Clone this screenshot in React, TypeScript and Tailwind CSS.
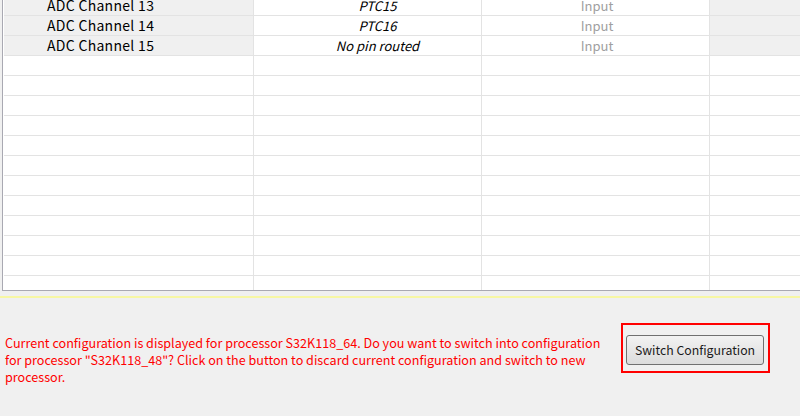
import React from "react";

const font = { fontFamily: '"Noto Sans CJK SC", "Noto Sans", sans-serif' };

const rows = [
  { name: "ADC Channel 13", pin: "PTC15", dir: "Input" },
  { name: "ADC Channel 14", pin: "PTC16", dir: "Input" },
  { name: "ADC Channel 15", pin: "No pin routed", dir: "Input" },
];

export default function App() {
  const empty = Array.from({ length: 12 });
  return (
    <div className="w-[800px] h-[416px] bg-[#f0f0f0] flex flex-col overflow-hidden text-[13px]" style={font}>
      <div className="ml-[2px] h-[291px] shrink-0 border-l border-b border-[#a9a9b2] bg-white overflow-hidden pl-[1px]">
        <div className="-mt-[4px] flex flex-col">
          {rows.map((r) => (
            <div key={r.name} className="flex h-[20px] border-b border-[#e3e3e3] leading-[19px]">
              <div className="w-[250px] shrink-0 border-r border-[#e3e3e3] bg-[#f0f0f0] pl-[43px] text-black text-[14px] tracking-[0.3px]">{r.name}</div>
              <div className="w-[228px] shrink-0 border-r border-[#e3e3e3] text-center italic text-black pl-[20px]">{r.pin}</div>
              <div className="w-[228px] shrink-0 border-r border-[#e3e3e3] text-center text-[#a0a0a0] pl-[3px]">{r.dir}</div>
              <div className="flex-1 bg-[#f0f0f0]" />
            </div>
          ))}
          {empty.map((_, i) => (
            <div key={i} className="flex h-[20px] border-b border-[#e3e3e3]">
              <div className="w-[250px] shrink-0 border-r border-[#e3e3e3]" />
              <div className="w-[228px] shrink-0 border-r border-[#e3e3e3]" />
              <div className="w-[228px] shrink-0 border-r border-[#e3e3e3]" />
              <div className="flex-1" />
            </div>
          ))}
        </div>
      </div>
      <div className="h-[5px] shrink-0" />
      <div className="h-[2px] shrink-0 bg-[#f7f7a4]" />
      <div className="flex flex-1">
        <div className="pl-[5px] pt-[36px] text-[#ff0000] leading-[17px] w-[621px] shrink-0 whitespace-nowrap text-[12.6px]">
          Current configuration is displayed for processor S32K118_64. Do you want to switch into configuration
          <br />
          for processor "S32K118_48"? Click on the button to discard current configuration and switch to new
          <br />
          processor.
        </div>
        <div className="mt-[25px] w-[149px] h-[50px] shrink-0 border-2 border-[#ff0000] pl-[3px] pt-[10px]">
          <button
            className="w-[138px] h-[30px] rounded-[3px] border border-[#707070] bg-gradient-to-b from-[#f2f2f2] to-[#dcdcdc] text-[12.3px] text-[#1a1a1a] leading-[28px]"
            style={font}
          >
            Switch Configuration
          </button>
        </div>
      </div>
    </div>
  );
}
